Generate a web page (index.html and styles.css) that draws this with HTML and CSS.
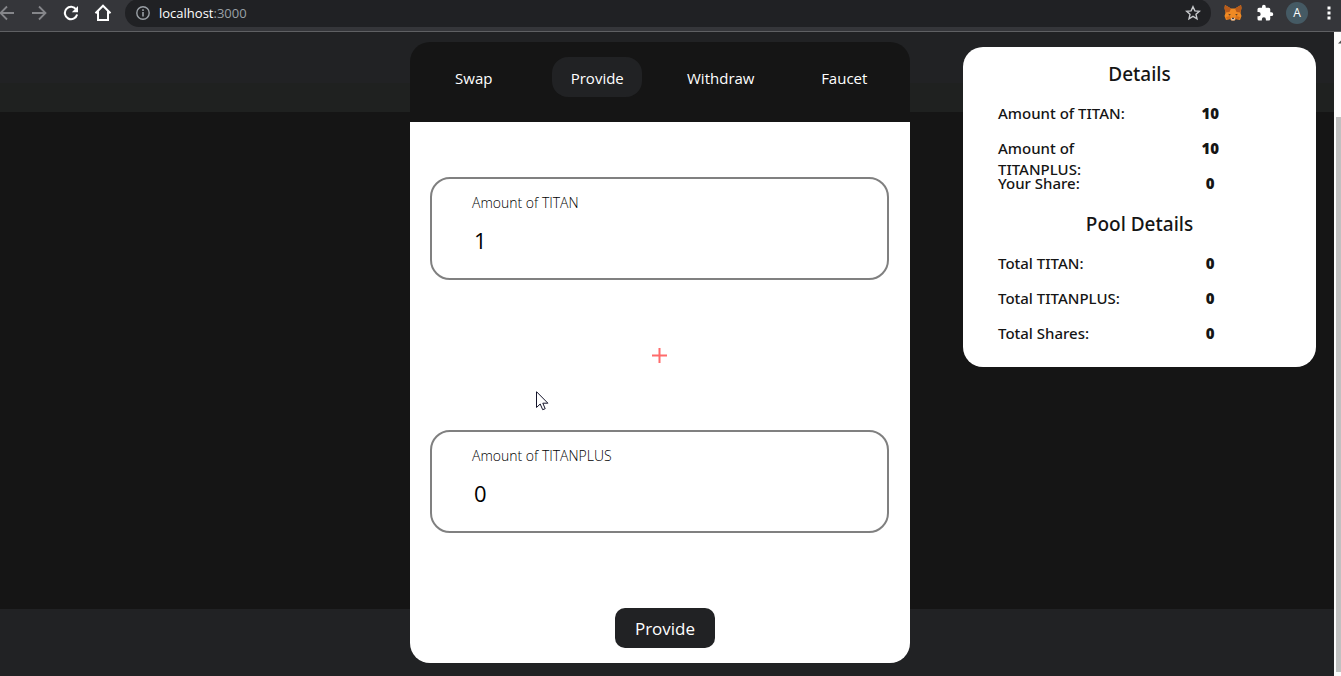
FILE: index.html
```html
<!DOCTYPE html>
<html lang="en">
<head>
<meta charset="utf-8">
<meta name="viewport" content="width=device-width, initial-scale=1">
<title>Provide liquidity</title>
<link rel="stylesheet" href="styles.css">
</head>
<body>
<header class="toolbar">
  <div class="tool-group nav-tools">
    <button class="tool muted" aria-label="Back"><svg width="16" height="16" viewBox="0 0 16 16"><path d="M15 8H2M8 1.500L1.500 8L8 14.500" fill="none" stroke="currentColor" stroke-width="1.800"/></svg></button>
    <button class="tool muted" aria-label="Forward"><svg width="16" height="16" viewBox="0 0 16 16"><path d="M1 8H14M8 1.500L14.500 8L8 14.500" fill="none" stroke="currentColor" stroke-width="1.800"/></svg></button>
    <button class="tool" aria-label="Reload"><svg width="16" height="16" viewBox="0 0 16 16"><path d="M13.200 4.500A6.200 6.200 0 1 0 14.100 9.500" fill="none" stroke="currentColor" stroke-width="2.100"/><path d="M15 1V7.200H8.800Z" fill="currentColor"/></svg></button>
    <button class="tool" aria-label="Home"><svg width="18" height="18" viewBox="0 0 18 18"><path d="M1.500 9.200L9 1.700L16.500 9.200M4 7.500V16H14V7.500" fill="none" stroke="currentColor" stroke-width="2"/></svg></button>
  </div>
  <div class="address">
    <svg width="14" height="14" viewBox="0 0 14 14"><circle cx="7" cy="7" r="6.200" fill="none" stroke="currentColor" stroke-width="1.400"/><path d="M7 6V10.500M7 3.300V4.900" stroke="currentColor" stroke-width="1.600"/></svg>
    <div class="url" role="textbox" aria-label="Address" contenteditable="true" spellcheck="false">localhost<span class="port">:3000</span></div>
    <button class="tool star" aria-label="Bookmark"><svg width="16" height="16" viewBox="0 0 16 16"><path d="M8 1.700L9.900 5.900L14.400 6.300L11 9.300L12 13.800L8 11.400L4 13.800L5 9.300L1.600 6.300L6.100 5.900Z" fill="none" stroke="currentColor" stroke-width="1.400"/></svg></button>
  </div>
  <div class="tool-group extension-tools">
    <button class="tool" aria-label="Wallet"><svg width="18" height="16" viewBox="0 0 18 16"><path d="M1 0L7 3.500H11L17 0L17.500 3L16.500 8L17.500 11L16 15L12 14L10.500 15.500H7.500L6 14L2 15L.5 11L1.500 8L.5 3Z" fill="#f08a24"/><path d="M1 0L7 3.500L5.500 7L1.500 7.500L.5 3ZM17 0L11 3.500L12.500 7L16.500 7.500L17.500 3Z" fill="#b85b1a"/><path d="M4.500 8.700L7 9.700L5 10.500ZM13.500 8.700L11 9.700L13 10.500Z" fill="#40352c"/><path d="M2 12L6 11L7 14L3 14.500ZM16 12L12 11L11 14L15 14.500Z" fill="#d66f18"/><path d="M7 13H11L10.500 15.500H7.500Z" fill="#d8c2b0"/><path d="M8 12.700H10L9.800 14H8.200Z" fill="#2f3035"/></svg></button>
    <button class="tool" aria-label="Extensions"><svg width="18" height="18" viewBox="0 0 24 24"><path d="M20.500 11H19V7a2 2 0 0 0-2-2h-4V3.500a2.500 2.500 0 0 0-5 0V5H4a2 2 0 0 0-2 2v3.800h1.500a2.700 2.700 0 0 1 0 5.400H2V20a2 2 0 0 0 2 2h3.800v-1.500a2.700 2.700 0 0 1 5.400 0V22H17a2 2 0 0 0 2-2v-4h1.500a2.500 2.500 0 0 0 0-5z" fill="currentColor"/></svg></button>
    <button class="tool" aria-label="Profile"><span class="avatar">A</span></button>
    <button class="tool" aria-label="Menu"><svg width="4" height="16" viewBox="0 0 4 16"><path d="M.5 1.500h3v3h-3zM.5 6.500h3v3h-3zM.5 11.500h3v3h-3z" fill="currentColor"/></svg></button>
  </div>
</header>
<div class="viewport">
  <main class="page">
    <section class="card">
      <nav class="tabs">
        <a class="tab" href="#swap">Swap</a>
        <a class="tab active" href="#provide" aria-current="page">Provide</a>
        <a class="tab" href="#withdraw">Withdraw</a>
        <a class="tab" href="#faucet">Faucet</a>
      </nav>
      <form class="form">
        <div class="field">
          <label for="titan">Amount of TITAN</label>
          <input id="titan" type="text" inputmode="decimal" value="1">
        </div>
        <div class="plus"><svg width="15" height="15" viewBox="0 0 15 15" aria-hidden="true"><path d="M0 7.500H15M7.500 0V15" stroke="#ff6b6b" stroke-width="2"/></svg></div>
        <div class="field">
          <label for="titanplus">Amount of TITANPLUS</label>
          <input id="titanplus" type="text" inputmode="decimal" value="0">
        </div>
        <div class="actions"><button class="submit" type="button">Provide</button></div>
      </form>
    </section>
    <aside class="details">
      <h2>Details</h2>
      <dl>
        <dt>Amount of TITAN:</dt><dd>10</dd>
        <dt>Amount of TITANPLUS:</dt><dd>10</dd>
        <dt>Your Share:</dt><dd>0</dd>
      </dl>
      <h2>Pool Details</h2>
      <dl>
        <dt>Total TITAN:</dt><dd>0</dd>
        <dt>Total TITANPLUS:</dt><dd>0</dd>
        <dt>Total Shares:</dt><dd>0</dd>
      </dl>
    </aside>
  </main>
  <div class="scrollbar" aria-hidden="true">
    <svg class="scroll-arrow" width="3" height="4" viewBox="0 0 3 4"><path d="M0 3.500L3 .5V3.500Z" fill="#505050"/></svg>
    <div class="scroll-thumb"></div>
  </div>
</div>
<svg class="cursor" width="13" height="20" viewBox="0 0 13 20" aria-hidden="true"><path d="M.5 .7V16.500L4.200 13L6.700 18.700L9.200 17.700L6.800 12.200H11.900Z" fill="#fff" stroke="#14142a"/></svg>
</body>
</html>
```

FILE: styles.css
```css
* {
  box-sizing: border-box;
}

body {
  margin: 0;
  min-height: 100vh;
  display: flex;
  flex-direction: column;
  overflow-x: hidden;
  background: #212224;
  color: #151515;
  font-family: "Open Sans", "Noto Sans", sans-serif;
}

button {
  font-family: inherit;
  border: 0;
  padding: 0;
}

.toolbar {
  display: flex;
  gap: 6px;
  height: 32px;
  overflow: hidden;
  background: #35363a;
  border-bottom: 1px solid #5f6063;
}

.tool-group {
  display: flex;
  height: 26px;
}

.nav-tools {
  margin-left: -9px;
}

.extension-tools {
  margin-right: -4px;
}

.tool {
  display: flex;
  align-items: center;
  justify-content: center;
  width: 32px;
  background: none;
  color: #fff;
}

.muted {
  color: #85868a;
}

.address {
  flex: 1;
  display: flex;
  align-items: center;
  gap: 9px;
  height: 28px;
  margin-top: -1px;
  padding: 0 2px 0 11px;
  border-radius: 14px;
  background: #202124;
  color: #9aa0a6;
}

.url {
  flex: 1;
  color: #fff;
  font-size: 13px;
  line-height: 20px;
}

.port {
  color: #9aa0a6;
}

.star {
  color: #c8cacd;
}

.avatar {
  width: 22px;
  height: 22px;
  border-radius: 50%;
  background: #455a64;
  font-size: 12px;
  line-height: 22px;
}

.viewport {
  flex: 1;
  display: flex;
}

.page {
  flex: 1;
  display: grid;
  grid-template-columns: 1fr 500px 1fr;
  align-items: start;
  padding: 10px 14px 13px 0;
  background: linear-gradient(#212224 51px, #1f2120 51px 80px, #151515 80px 577px, #212224 577px);
}

.card {
  grid-column: 2;
}

.tabs {
  display: grid;
  grid-template-columns: repeat(4, 1fr);
  justify-items: center;
  height: 80px;
  padding: 15px 4px 0 2px;
  border-radius: 20px 20px 0 0;
  background: #151515;
}

.tab {
  width: 90px;
  height: 40px;
  border-radius: 16px;
  color: #fff;
  font-size: 15px;
  line-height: 42px;
  text-align: center;
  text-decoration: none;
}

.active {
  background: #212224;
}

.form {
  padding: 55px 21px 15px 20px;
  border-radius: 0 0 20px 20px;
  background: #fff;
}

.field {
  display: flex;
  flex-direction: column;
  gap: 9px;
  padding: 14px 40px 21px;
  border: 2px solid #808080;
  border-radius: 20px;
}

.field label {
  color: #000;
  font-size: 14px;
  font-weight: 300;
  line-height: 20px;
}

.field input {
  width: 100%;
  height: 35px;
  padding: 0 2px;
  border: 0;
  outline: 0;
  background: none;
  color: #000;
  font-family: inherit;
  font-size: 22px;
}

.plus {
  display: flex;
  align-items: center;
  justify-content: center;
  height: 150px;
}

.actions {
  display: flex;
  justify-content: center;
  padding: 75px 0 0 11px;
}

.submit {
  width: 100px;
  height: 40px;
  border-radius: 10px;
  background: #212224;
  color: #fff;
  font-size: 17px;
}

.details {
  margin: 5px 4px 0 53px;
  padding: 11px 35px 9px;
  border-radius: 20px;
  background: #fff;
}

.details h2 {
  margin: 0 0 13px;
  font-family: "Noto Sans", "Open Sans", sans-serif;
  font-size: 19px;
  font-weight: 500;
  line-height: 32px;
  text-align: center;
}

.details dl {
  display: grid;
  grid-template-columns: 1fr 1fr;
  grid-auto-rows: 35px;
  margin: 0;
  font-size: 15px;
  line-height: 21px;
}

.details dt {
  font-family: "Noto Sans", "Open Sans", sans-serif;
  font-weight: 500;
}

.details dd {
  margin: 0;
  font-weight: 800;
  text-align: center;
}

.scrollbar {
  display: flex;
  flex-direction: column;
  align-items: flex-end;
  width: 7px;
  padding: 8px 0 4px;
  background: #fcfcfc;
}

.scroll-arrow {
  flex: none;
  margin-bottom: 73px;
}

.scroll-thumb {
  flex: 1;
  width: 5px;
  background: #c1c1c1;
}

.cursor {
  position: absolute;
  left: 536px;
  top: 391px;
}
```
